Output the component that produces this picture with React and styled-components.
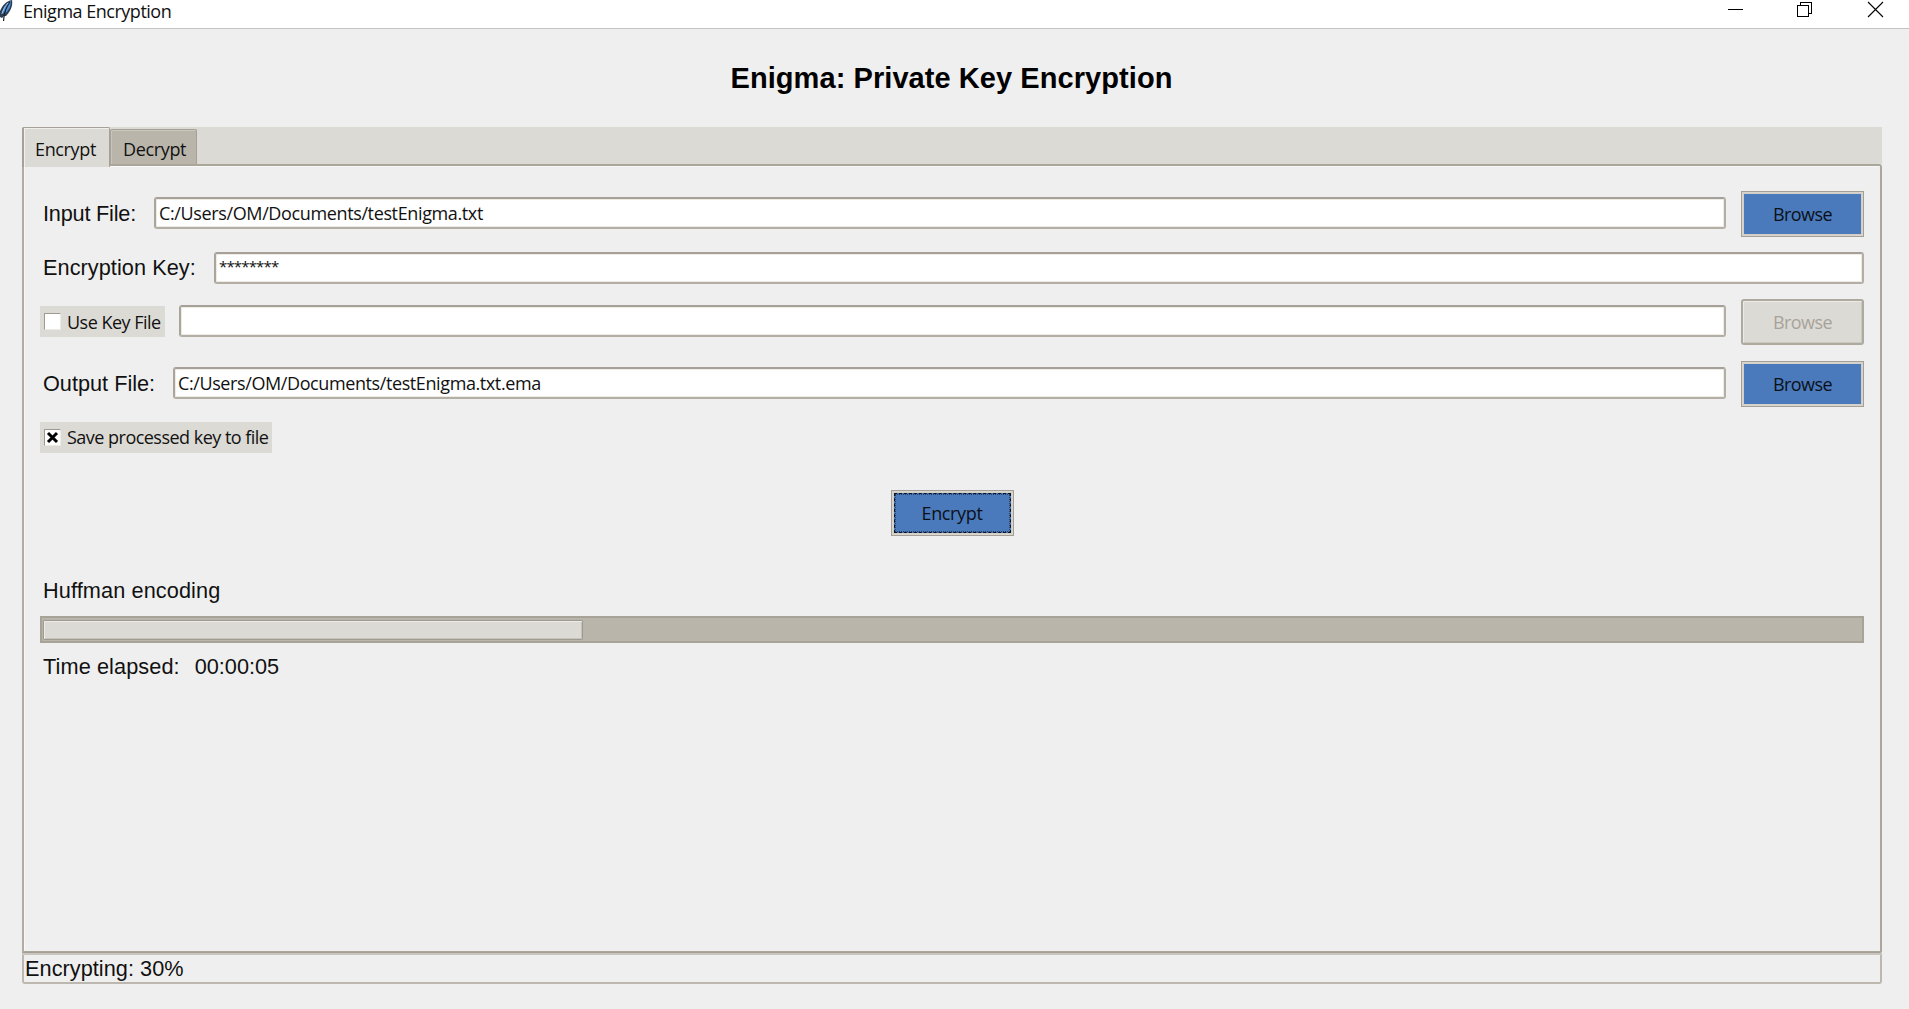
import React from "react";
import styled, { createGlobalStyle, css } from "styled-components";

const Global = createGlobalStyle`
  * { box-sizing: border-box; }
  html, body { margin: 0; padding: 0; }
  body { background: #efefef; overflow: hidden; }
`;

const sans = `"Liberation Sans", Arial, sans-serif`;
const ui = `"Open Sans", "Noto Sans", sans-serif`;

const Window = styled.div`
  width: 1909px;
  height: 1009px;
  display: flex;
  flex-direction: column;
  background: #efefef;
  color: #111;
  font-family: ${sans};
  font-size: 21.7px;
`;
const TitleBar = styled.header`
  height: 29px;
  flex: none;
  display: flex;
  justify-content: space-between;
  background: #fff;
  border-bottom: 1px solid #c3c3c3;
`;
const TitleGroup = styled.div`
  display: flex;
  gap: 9px;
`;
const Text = styled.span`
  display: block;
  white-space: pre;
  font-family: ${(p) => (p.$ui ? ui : sans)};
  font-size: ${(p) => p.$size || 21.7}px;
  letter-spacing: ${(p) => p.$ls || 0}px;
  line-height: ${(p) => p.$lh || 24}px;
`;
const Controls = styled.div`
  display: flex;
  gap: 54px;
  padding: 1px 25px 0 0;
  svg { display: block; }
  svg:first-child { margin-right: -2px; }
`;
const Heading = styled.h1`
  margin: 0;
  padding: 31px 6px 0 0;
  height: 98px;
  flex: none;
  text-align: center;
  font-size: 29px;
  line-height: 36px;
  letter-spacing: 0.07px;
  font-weight: 700;
  color: #000;
`;
const Notebook = styled.main`
  width: 1860px;
  margin-left: 22px;
  height: 826px;
  display: flex;
  flex-direction: column;
`;
const Tabs = styled.nav`
  height: 37px;
  display: flex;
  align-items: flex-end;
  background: #dbdad4;
`;
const Tab = styled.div`
  position: relative;
  z-index: ${(p) => (p.$active ? 1 : 0)};
  width: ${(p) => (p.$active ? 88 : 87)}px;
  height: ${(p) => (p.$active ? 40 : 35)}px;
  margin-bottom: ${(p) => (p.$active ? -3 : 0)}px;
  padding-top: ${(p) => (p.$active ? 9 : 7)}px;
  padding-left: ${(p) => (p.$active ? 11 : 12)}px;
  background: ${(p) => (p.$active ? "#dcdad5" : "#bab5ab")};
  border: solid #a5a198;
  border-width: ${(p) => (p.$active ? "1px 1px 0 2px" : "1px 1px 0 1px")};
  border-radius: 2px 2px 0 0;
  box-shadow: inset 1px 1px 0 ${(p) => (p.$active ? "#f0efeb" : "#cbc6bd")};
`;
const Panel = styled.section`
  height: 789px;
  padding: 24px 16px 0 16px;
  border: 2px solid #aaa69c;
  border-left-color: #b0aca3;
  border-radius: 0 3px 2px 0;
  box-shadow: inset 1px 1px 0 #f8f8f6;
`;
const Row = styled.div`
  height: ${(p) => p.$h}px;
  margin-bottom: ${(p) => p.$mb || 0}px;
  display: flex;
  align-items: center;
`;
const Label = styled.div`
  width: ${(p) => p.$w}px;
  flex: none;
  padding-left: 3px;
`;
const Entry = styled.div`
  flex: 1;
  height: 32px;
  margin-top: -1px;
  padding: 2px 0 0 3px;
  background: #fff;
  border: 2px solid #b3afa5;
  border-top-color: #a5a198;
  border-left-color: #a9a59b;
  border-radius: 3px;
  box-shadow: inset 1px 1px 0 #eeebe7, inset -1px -1px 0 #eeebe7;
`;
const Button = styled.button`
  width: ${(p) => p.$w || 123}px;
  height: 46px;
  flex: none;
  margin: 0 0 0 ${(p) => p.$ml ?? 15}px;
  padding: 0;
  display: flex;
  align-items: center;
  justify-content: center;
  color: #0b1018;
  background: #4a7abc;
  border: 1px solid #a39f96;
  box-shadow: inset 0 0 0 1px #d8d5ce, inset 0 0 0 2px #d3cfc7;
  ${(p) =>
    p.disabled &&
    css`
      color: #a8a39a;
      background: #dcdad5;
      border: 2px solid #aeaaa0;
      border-radius: 3px;
      box-shadow: inset 1px 1px 0 #edebe7, inset -1px -1px 0 #cbc8c0;
    `}
`;
const FocusRing = styled.span`
  width: 117px;
  height: 40px;
  flex: none;
  display: flex;
  align-items: center;
  justify-content: center;
  border: 1px dashed #0b1220;
  outline: 1px dotted #27406a;
  outline-offset: -2px;
`;
const Check = styled.div`
  height: 31px;
  width: ${(p) => p.$w}px;
  margin-right: ${(p) => p.$mr || 0}px;
  flex: none;
  display: flex;
  align-items: center;
  gap: 6px;
  padding-left: 4px;
  background: #dcdad5;
`;
const Box = styled.span`
  width: 17px;
  height: 17px;
  flex: none;
  background: #fff;
  border: 1px solid #eeebe7;
  border-top-color: #9e9a91;
  border-left-color: #9e9a91;
  svg { display: block; }
`;
const Center = styled.div`
  margin: 37px 0 43px;
  display: flex;
  justify-content: center;
`;
const Line = styled.div`
  height: 24px;
  padding-left: 3px;
  display: flex;
  gap: 15px;
`;
const Track = styled.div`
  height: 27px;
  margin: 13px 0 12px;
  padding: 2px 1px;
  background: #bab5ab;
  border: 2px solid #a8a399;
`;
const Bar = styled.div`
  height: 20px;
  background: #dcdad5;
  border: 1px solid #9e9a91;
  border-radius: 1px;
  box-shadow: inset 1px 1px 0 #edebe7, inset -1px -1px 0 #c6c3bb;
`;
const Status = styled.footer`
  width: 1860px;
  height: 31px;
  margin-left: 22px;
  padding: 2px 0 0 1px;
  border: 2px solid #bcb8af;
  border-top-color: #c8c5bd;
  border-radius: 3px;
  box-shadow: 0 -1px 0 #a39f96;
`;

const Feather = () => (
  <svg width="14" height="22" viewBox="0 0 14 22">
    <path d="M0 11C2 6 6 1 12 0c1 5-1 11-6 16l-2 0-2 2-2-1z" fill="#2b3f55" />
    <path d="M2 12C4 7 7 3 11 1c0 5-2 9-6 13l1-5-3 5z" fill="#4c8fd6" />
    <path d="M10 2C6 7 4 13 3.5 21" fill="none" stroke="#15202b" strokeWidth="1.2" />
    <path d="M8 3C5 6 3 10 1.8 14" fill="none" stroke="#b9d4ee" strokeWidth=".8" />
  </svg>
);

const Caption = ({ ls = -0.35, children }) => (
  <Text $ui $size={18} $ls={ls}>{children}</Text>
);

export default function App() {
  const progress = 30;
  return (
    <Window>
      <Global />
      <TitleBar>
        <TitleGroup>
          <Feather />
          <Text $ui $size={18} $ls={-0.49} $lh={22}>Enigma Encryption</Text>
        </TitleGroup>
        <Controls>
          <svg width="17" height="17" viewBox="0 0 17 17" shapeRendering="crispEdges">
            <path d="M1 8.5h15" stroke="#000" />
          </svg>
          <svg width="17" height="17" viewBox="0 0 17 17" shapeRendering="crispEdges" fill="none" stroke="#000">
            <path d="M1.5 4.5h11v11h-11zM4.5 4V1.5h11v11H13" />
          </svg>
          <svg width="17" height="17" viewBox="0 0 17 17" stroke="#000" strokeWidth="1.1">
            <path d="M1 1l15 15M16 1L1 16" />
          </svg>
        </Controls>
      </TitleBar>
      <Heading>Enigma: Private Key Encryption</Heading>
      <Notebook>
        <Tabs>
          <Tab $active><Caption>Encrypt</Caption></Tab>
          <Tab><Caption>Decrypt</Caption></Tab>
        </Tabs>
        <Panel>
          <Row $h={47} $mb={15}>
            <Label $w={114}><Text $ls={-0.2}>Input File:</Text></Label>
            <Entry><Caption ls={-0.37}>C:/Users/OM/Documents/testEnigma.txt</Caption></Entry>
            <Button><Caption ls={-0.6}>Browse</Caption></Button>
          </Row>
          <Row $h={32} $mb={14}>
            <Label $w={174}><Text $ls={0.06}>Encryption Key:</Text></Label>
            <Entry><Text $ui $size={15} $ls={-0.85} $lh={21}>********</Text></Entry>
          </Row>
          <Row $h={47} $mb={15}>
            <Check $w={125} $mr={14}><Box /><Caption ls={-0.52}>Use Key File</Caption></Check>
            <Entry />
            <Button disabled><Caption ls={-0.6}>Browse</Caption></Button>
          </Row>
          <Row $h={47} $mb={14}>
            <Label $w={133}><Text>Output File:</Text></Label>
            <Entry><Caption ls={-0.4}>C:/Users/OM/Documents/testEnigma.txt.ema</Caption></Entry>
            <Button><Caption ls={-0.6}>Browse</Caption></Button>
          </Row>
          <Row $h={32}>
            <Check $w={232}>
              <Box>
                <svg width="15" height="15" viewBox="0 0 15 15">
                  <path d="M3 3l9 9M12 3l-9 9" stroke="#000" strokeWidth="3" />
                </svg>
              </Box>
              <Caption ls={-0.52}>Save processed key to file</Caption>
            </Check>
          </Row>
          <Center>
            <Button $ml={0}><FocusRing><Caption>Encrypt</Caption></FocusRing></Button>
          </Center>
          <Line><Text $ls={0.11}>Huffman encoding</Text></Line>
          <Track><Bar style={{ width: `${progress * 0.99}%` }} /></Track>
          <Line>
            <Text $ls={0.1}>Time elapsed:</Text>
            <Text>00:00:05</Text>
          </Line>
        </Panel>
      </Notebook>
      <Status><Text $ls={0.05}>Encrypting: 30%</Text></Status>
    </Window>
  );
}
